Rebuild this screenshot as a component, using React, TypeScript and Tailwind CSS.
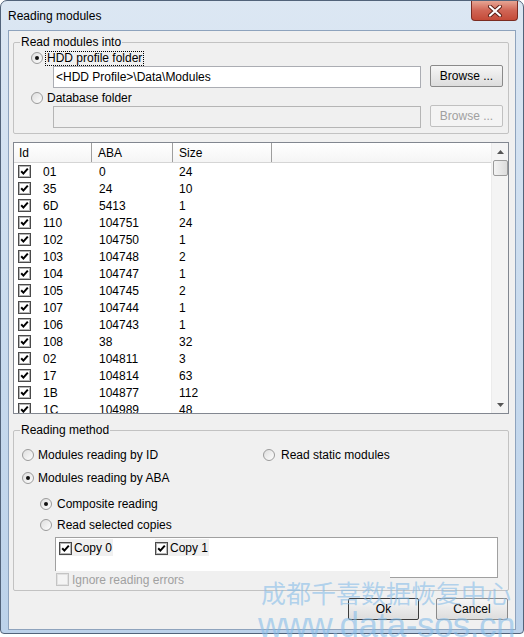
import React from 'react';

const rows: [string, string, string][] = [
  ['01', '0', '24'],
  ['35', '24', '10'],
  ['6D', '5413', '1'],
  ['110', '104751', '24'],
  ['102', '104750', '1'],
  ['103', '104748', '2'],
  ['104', '104747', '1'],
  ['105', '104745', '2'],
  ['107', '104744', '1'],
  ['106', '104743', '1'],
  ['108', '38', '32'],
  ['02', '104811', '3'],
  ['17', '104814', '63'],
  ['1B', '104877', '112'],
  ['1C', '104989', '48'],
];

const Radio = ({ checked = false }: { checked?: boolean }) => (
  <svg width="12" height="12" viewBox="0 0 12 12" className="shrink-0">
    <defs>
      <linearGradient id="rg" x1="0" y1="0" x2="1" y2="1">
        <stop offset="0" stopColor="#dcdcdc" />
        <stop offset="1" stopColor="#ffffff" />
      </linearGradient>
    </defs>
    <circle cx="6" cy="6" r="5.5" fill="url(#rg)" stroke="#9a9a9a" />
    {checked && <circle cx="6" cy="6" r="2" fill="#111" />}
  </svg>
);

const Check = ({ checked = true, disabled = false }: { checked?: boolean; disabled?: boolean }) => (
  <svg width="13" height="13" viewBox="0 0 13 13" className="shrink-0">
    <rect x="0.5" y="0.5" width="12" height="12" fill={disabled ? '#f4f4f4' : '#fff'} stroke={disabled ? '#c4c4c4' : '#4a4a4a'} />
    <rect x="1.5" y="1.5" width="10" height="10" fill="none" stroke={disabled ? '#e2e2e2' : '#b5b5b5'} />
    {checked && <path d="M3.2 6.3 L5.4 8.6 L9.8 3.6" fill="none" stroke="#000" strokeWidth="2" />}
  </svg>
);

const Button = ({ label, disabled = false, primary = false, w }: { label: string; disabled?: boolean; primary?: boolean; w: string }) => (
  <div
    className={`${w} h-[22px] flex items-center justify-center rounded-[2px] border ${
      primary ? 'border-[#3c3c3c]' : disabled ? 'border-[#c0c0c0]' : 'border-[#8a8a8a]'
    } ${disabled ? 'bg-[#f4f4f4] text-[#a0a0a0]' : 'bg-gradient-to-b from-[#f6f6f6] to-[#dddddd] text-black'}`}
  >
    {label}
  </div>
);

export default function App() {
  return (
    <div className="w-[524px] h-[637px] bg-white font-['Liberation_Sans',Arial,sans-serif] text-[12px] text-black leading-[14px] relative overflow-hidden select-none">
      <div className="w-[524px] h-[634px] flex flex-col rounded-t-[7px] rounded-b-[4px] border border-[#52637a] bg-gradient-to-b from-[#dce7f3] via-[#c9dbee] to-[#bcd2ea]">
        {/* title bar */}
        <div className="h-[29px] flex items-start justify-between shrink-0">
          <div className="pl-[7px] pt-[8px] text-[12px]">Reading modules</div>
          <div className="mr-[5px] w-[47px] h-[20px] rounded-b-[4px] border border-t-0 border-[#7b2c22] bg-gradient-to-b from-[#e6a594] via-[#d06555] to-[#c44a38] flex items-center justify-center">
            <svg width="16" height="12" viewBox="0 0 16 12">
              <path d="M3 1.5 L13 10.5 M13 1.5 L3 10.5" stroke="#5a1d14" strokeWidth="4" strokeLinecap="round" />
              <path d="M3 1.5 L13 10.5 M13 1.5 L3 10.5" stroke="#ffffff" strokeWidth="2.2" strokeLinecap="round" />
            </svg>
          </div>
        </div>

        {/* client */}
        <div className="mx-[7px] mb-[3px] flex-1 border border-[#8ea3bd] bg-[#f0f0f0] pl-[4px] pr-[6px] flex flex-col">
          <fieldset className="mt-[4px] border border-[#c2c2c2] rounded-[2px] pb-[5px]">
            <legend className="ml-[6px] px-[1px]">Read modules into</legend>
            <div className="mt-[1px] h-[16px] pl-[17px] flex items-center gap-[2px]">
              <Radio checked />
              <span className="px-[1px] border border-dotted border-black leading-[13px]">HDD profile folder</span>
            </div>
            <div className="h-[22px] flex items-center">
              <div className="ml-[39px] w-[368px] h-[22px] bg-white border border-[#abadb3] flex items-center pl-[2px]">&lt;HDD Profile&gt;\Data\Modules</div>
              <div className="ml-[9px] -mt-[2px]">
                <Button label="Browse ..." w="w-[73px]" />
              </div>
            </div>
            <div className="mt-[2px] h-[16px] pl-[17px] flex items-center gap-[3px]">
              <Radio />
              <span className="px-[1px]">Database folder</span>
            </div>
            <div className="h-[22px] flex items-center">
              <div className="ml-[39px] w-[368px] h-[22px] bg-[#f0f0f0] border border-[#b5b5b5]" />
              <div className="ml-[9px] -mt-[3px]">
                <Button label="Browse ..." w="w-[73px]" disabled />
              </div>
            </div>
          </fieldset>

          {/* list */}
          <div className="mt-[8px] h-[272px] border border-[#828790] bg-white flex overflow-hidden">
            <div className="flex-1 flex flex-col overflow-hidden">
              <div className="h-[20px] shrink-0 flex border-b border-[#d5d5d5] bg-gradient-to-b from-white to-[#f5f5f5]">
                <div className="w-[78px] pl-[5px] flex items-center border-r border-[#9e9e9e]">Id</div>
                <div className="w-[81px] pl-[6px] flex items-center border-r border-[#9e9e9e]">ABA</div>
                <div className="w-[99px] pl-[6px] flex items-center border-r border-[#9e9e9e]">Size</div>
                <div className="flex-1" />
              </div>
              {rows.map(([id, aba, size]) => (
                <div key={id} className="h-[17px] shrink-0 flex items-center">
                  <div className="w-[78px] pl-[4px] flex items-center">
                    <Check />
                    <span className="ml-[12px]">{id}</span>
                  </div>
                  <div className="w-[81px] pl-[7px]">{aba}</div>
                  <div className="w-[99px] pl-[6px]">{size}</div>
                </div>
              ))}
            </div>
            <div className="w-[17px] shrink-0 bg-[#f4f4f4] border-l border-[#ececec] flex flex-col items-center">
              <div className="h-[17px] w-full flex items-center justify-center">
                <svg width="7" height="4" viewBox="0 0 7 4"><path d="M0 4 L3.5 0 L7 4 Z" fill="#555" /></svg>
              </div>
              <div className="w-[15px] h-[16px] rounded-[2px] border border-[#9b9b9b] bg-gradient-to-r from-[#f3f3f3] to-[#dcdcdc]" />
              <div className="flex-1" />
              <div className="h-[17px] w-full flex items-center justify-center">
                <svg width="7" height="4" viewBox="0 0 7 4"><path d="M0 0 L7 0 L3.5 4 Z" fill="#555" /></svg>
              </div>
            </div>
          </div>

          <fieldset className="mt-[9px] border border-[#c2c2c2] rounded-[2px] pb-[2px]">
            <legend className="ml-[6px] px-[1px]">Reading method</legend>
            <div className="mt-[10px] h-[16px] pl-[8px] flex items-center">
              <div className="w-[241px] flex items-center gap-[4px]">
                <Radio />
                <span>Modules reading by ID</span>
              </div>
              <div className="flex items-center gap-[6px]">
                <Radio />
                <span>Read static modules</span>
              </div>
            </div>
            <div className="mt-[7px] h-[16px] pl-[8px] flex items-center gap-[4px]">
              <Radio checked />
              <span>Modules reading by ABA</span>
            </div>
            <div className="mt-[10px] h-[16px] pl-[26px] flex items-center gap-[5px]">
              <Radio checked />
              <span>Composite reading</span>
            </div>
            <div className="mt-[5px] h-[16px] pl-[26px] flex items-center gap-[5px]">
              <Radio />
              <span>Read selected copies</span>
            </div>
            <div className="mt-[4px] ml-[41px] w-[443px] h-[41px] bg-white border border-[#a0a0a0] pl-[3px] pt-[1px] flex items-start">
              <div className="w-[54px] h-[17px] bg-[#f0f0f0] flex items-center gap-[2px] pt-[1px]">
                <Check />
                <span>Copy 0</span>
              </div>
              <div className="ml-[42px] w-[54px] h-[17px] bg-[#f0f0f0] flex items-center gap-[2px] pt-[1px]">
                <Check />
                <span>Copy 1</span>
              </div>
            </div>
            <div className="-mt-[7px] ml-[41px] w-[335px] h-[17px] bg-[#f0f0f0] flex items-center pl-[1px] gap-[3px] text-[#a0a0a0] relative">
              <Check checked={false} disabled />
              <span>Ignore reading errors</span>
            </div>
          </fieldset>

          <div className="mt-[7px] flex justify-end gap-[17px] pr-[1px]">
            <Button label="Ok" w="w-[71px]" primary />
            <Button label="Cancel" w="w-[72px]" />
          </div>
        </div>
      </div>

      {/* watermark */}
      <div className="absolute left-[261px] top-[578px] pointer-events-none flex flex-col text-[#86bde9]/60">
        <div className="text-[25px] leading-[29px] font-['Noto_Sans_CJK_SC',sans-serif]">成都千喜数据恢复中心</div>
        <div className="text-[35px] leading-[36px] -ml-[3px] tracking-[-0.5px]">www.data-sos.cn</div>
      </div>
    </div>
  );
}
